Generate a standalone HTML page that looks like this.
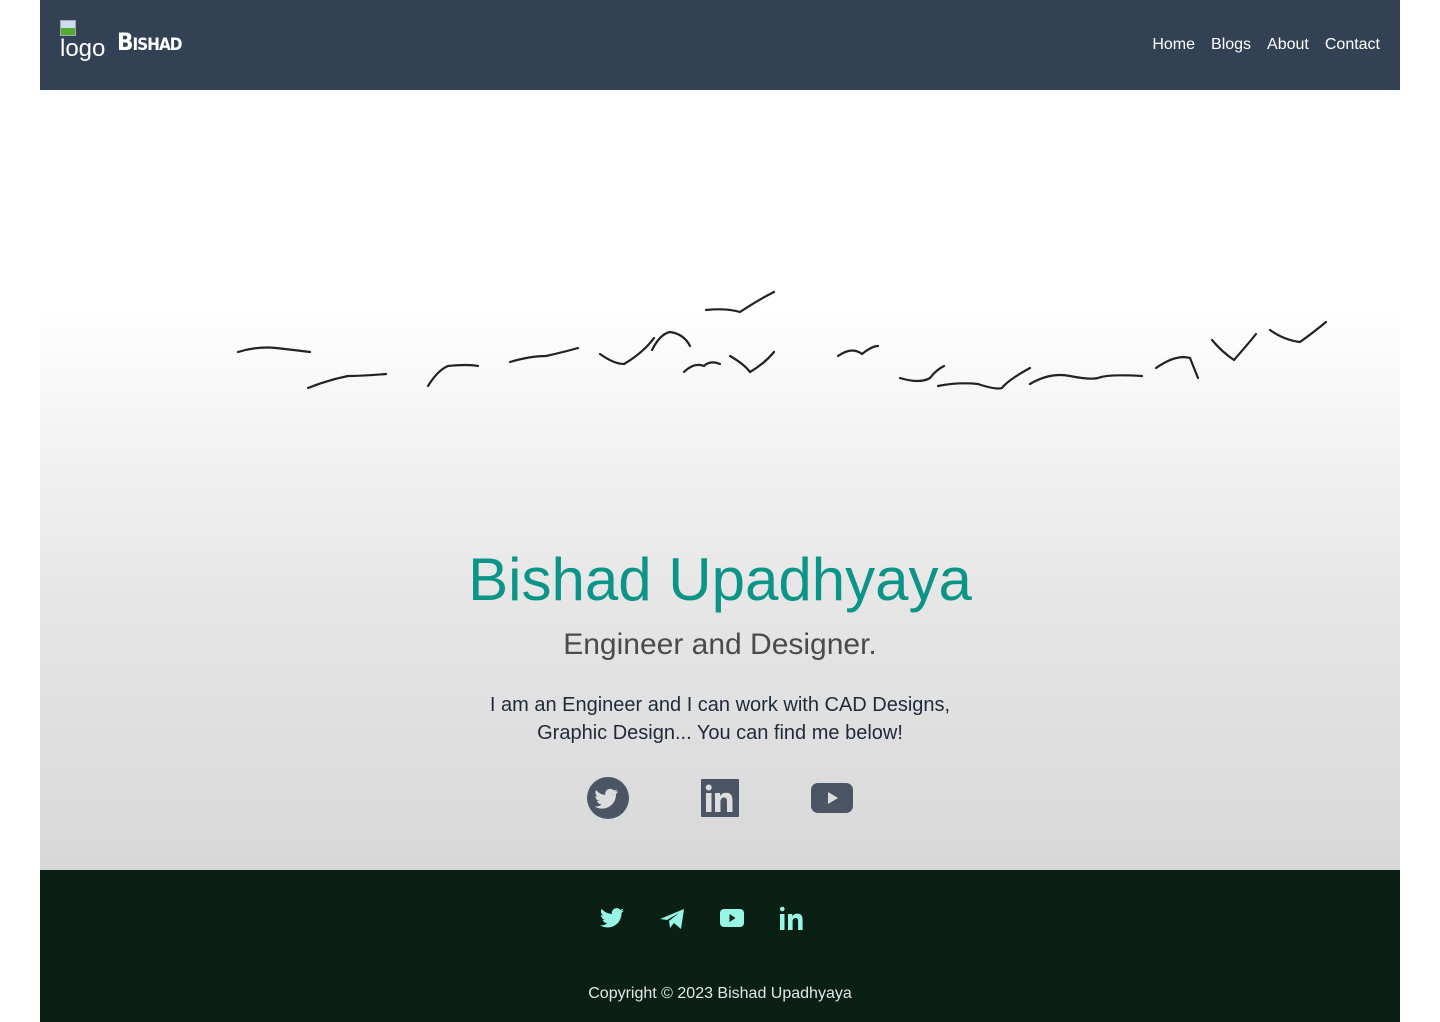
<!DOCTYPE html>
<html><head><meta charset="utf-8"><style>
*{margin:0;padding:0;box-sizing:border-box}
body{width:1440px;height:1022px;background:#fff;font-family:"Liberation Sans",sans-serif;position:relative;overflow:hidden}
.wrap{position:absolute;left:40px;top:0;width:1360px;height:1022px}
header{height:90px;background:#334155;position:relative}
.logo{position:absolute;left:20px;top:20px;color:#fff;font-size:24px;line-height:26px}
.logo .img{width:16px;height:16px;border:1px solid #aaa;background:linear-gradient(#cde 50%,#5a3 50%);}
.brand{position:absolute;left:77px;top:28px;color:#fff;font-size:24px;font-weight:bold;font-variant:small-caps;letter-spacing:-1px;font-family:"DejaVu Sans Condensed","Liberation Sans",sans-serif}
nav{position:absolute;right:20px;top:36px;color:#fff;font-size:16px}
nav span{margin-left:16px}
.hero{position:absolute;top:90px;left:0;width:1360px;height:780px;background:linear-gradient(#fff 0%,#fff 28%,#f3f3f3 45%,#e6e6e6 65%,#dcdcdc 90%,#d8d8d8 100%)}
h1{position:absolute;top:455px;width:100%;text-align:center;color:#0d9488;font-size:60px;font-weight:normal}
h2{position:absolute;top:538px;width:100%;text-align:center;color:#4b4b4b;font-size:30px;font-weight:normal}
p.d{position:absolute;top:601px;width:100%;text-align:center;color:#1f2937;font-size:20px;line-height:28px}
footer{position:absolute;top:870px;left:0;width:1360px;height:152px;background:#0a2014}
.copy{position:absolute;top:115px;width:100%;text-align:center;color:#e5e7eb;font-size:16px}
svg{position:absolute}
</style></head><body><div class="wrap">
<header><div class="logo"><div class="img"></div>logo</div><div class="brand">Bishad</div>
<nav><span>Home</span><span>Blogs</span><span>About</span><span>Contact</span></nav></header>
<div class="hero">
<svg width="1360" height="200" style="left:0;top:190px" fill="none" stroke="#222" stroke-width="2.2" stroke-linecap="round">
<path d="M198 72q20-6 38-4 18 2 34 4"/><path d="M268 108q20-8 40-12 14 0 38-2"/><path d="M388 106q10-16 20-20 20-2 30 0"/><path d="M470 82q20-6 36-6 18-4 32-8"/><path d="M560 74q14 10 24 10 20-12 30-26"/><path d="M612 70q8-16 18-18 14 2 20 14"/><path d="M644 92q10-10 20-6 6-6 16-2"/><path d="M690 76q14 8 20 16 14-8 24-20"/><path d="M666 30q20-2 34 2 18-12 34-20"/><path d="M798 76q14-10 24-2 10-8 16-8"/><path d="M860 98q20 6 30 0 6-8 14-12"/><path d="M898 106q20-4 40-2 18 6 24 4 6-8 28-20"/><path d="M990 104q20-12 40-8 20 4 28 2 10-4 44-2"/><path d="M1116 88q20-14 34-10 4 10 8 20"/><path d="M1172 60q10 12 22 20 14-16 22-26"/><path d="M1230 50q14 10 30 12 14-10 26-20"/>
</svg>
<h1>Bishad Upadhyaya</h1><h2>Engineer and Designer.</h2>
<p class="d">I am an Engineer and I can work with CAD Designs,<br>Graphic Design... You can find me below!</p>
<svg style="left:546px;top:686px" width="44" height="44" viewBox="0 0 44 44"><circle cx="22" cy="22" r="21" fill="#4b5563"/><path d="M32 15c-1 .5-2 .7-3 .8 1-.6 1.8-1.6 2-2.6-1 .6-2 1-3.2 1.2A5 5 0 0 0 19.3 19 14 14 0 0 1 10 14a5 5 0 0 0 1.6 6.6c-.8 0-1.6-.3-2.3-.6 0 2.4 1.7 4.4 4 4.9-.7.2-1.5.2-2.3.1.7 2 2.5 3.4 4.7 3.4A10 10 0 0 1 8.6 30.5 14 14 0 0 0 30 18.5v-.6c1-.7 1.600-1.4 2-2.9z" fill="#ddd"/></svg>
<svg style="left:661px;top:689px" width="38" height="38" viewBox="0 0 38 38"><rect width="38" height="38" rx="1" fill="#4b5563"/><rect x="5" y="14" width="5.5" height="19" fill="#ddd"/><circle cx="7.7" cy="8.5" r="3" fill="#ddd"/><path d="M14 14h5v3c1.2-2 3-3.3 6-3.3 5 0 6.5 3 6.5 8V33H26V23c0-2.5-.5-4.5-3-4.5s-3.5 2-3.5 4.5v10H14z" fill="#ddd"/></svg>
<svg style="left:771px;top:693px" width="42" height="30" viewBox="0 0 42 30"><rect width="42" height="30" rx="7" fill="#4b5563"/><path d="M17 9l10 6-10 6z" fill="#ddd"/></svg>
</div>
<footer>
<svg style="left:560px;top:37px" width="24" height="22" viewBox="0 0 24 20"><path d="M24 2.4c-.9.4-1.8.6-2.8.8 1-.6 1.8-1.6 2.2-2.7-1 .6-2 1-3.1 1.2A4.9 4.9 0 0 0 11.9 6 14 14 0 0 1 1.7 .9 4.9 4.9 0 0 0 3.2 7.5 5 5 0 0 1 1 6.9c0 2.4 1.7 4.4 3.900 4.8-.7.2-1.5.2-2.2.1.6 2 2.4 3.4 4.6 3.4A9.9 9.9 0 0 1 0 17.3 14 14 0 0 0 7.5 19.5c9 0 14-7.5 14-14v-.6c1-.7 1.8-1.6 2.5-2.5z" fill="#99f6e4"/></svg>
<svg style="left:620px;top:38px" width="24" height="21" viewBox="0 0 24 21"><path d="M0 11L24 1 21 21 14 15 10 20 9 13 19 5 7 12z" fill="#99f6e4"/></svg>
<svg style="left:680px;top:39px" width="24" height="18" viewBox="0 0 24 18"><rect width="24" height="18" rx="4" fill="#99f6e4"/><path d="M9.5 5l6 4-6 4z" fill="#0a2014"/></svg>
<svg style="left:740px;top:36px" width="24" height="24" viewBox="0 0 24 24"><rect x="0" y="8" width="4.5" height="16" fill="#99f6e4"/><circle cx="2.3" cy="3" r="2.3" fill="#99f6e4"/><path d="M8 8h4.3v2.3c1-1.6 2.6-2.7 5-2.7 4.2 0 5.3 2.7 5.3 6.5V24h-4.5v-8.5c0-2-.4-3.5-2.4-3.5s-3.1 1.5-3.1 3.6V24H8z" fill="#99f6e4"/></svg>
<div class="copy">Copyright © 2023 Bishad Upadhyaya</div>
</footer>
</div></body></html>
